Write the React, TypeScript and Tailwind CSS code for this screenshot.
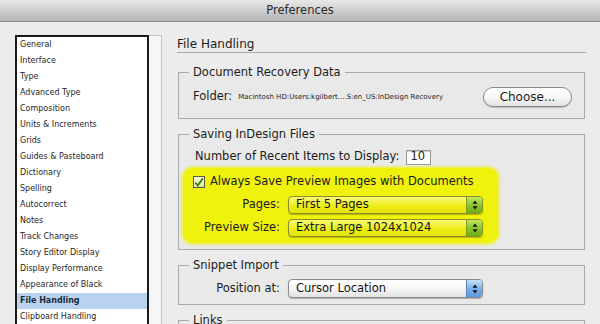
import React from 'react';

const categories = [
  'General',
  'Interface',
  'Type',
  'Advanced Type',
  'Composition',
  'Units & Increments',
  'Grids',
  'Guides & Pasteboard',
  'Dictionary',
  'Spelling',
  'Autocorrect',
  'Notes',
  'Track Changes',
  'Story Editor Display',
  'Display Performance',
  'Appearance of Black',
  'File Handling',
  'Clipboard Handling',
];

const Arrows: React.FC = () => (
  <svg width="6" height="10" viewBox="0 0 6 10">
    <path d="M3 0.5 L5.5 3.8 L0.5 3.8 Z" fill="#111" />
    <path d="M3 9.5 L5.5 6.2 L0.5 6.2 Z" fill="#111" />
  </svg>
);

const Select: React.FC<{ value: string; tone: 'yellow' | 'blue'; h: string }> = ({ value, tone, h }) => {
  const yellow = tone === 'yellow';
  return (
    <div
      className={
        'ml-[8px] flex w-[195px] overflow-hidden rounded-[4px] border shadow-[0_1px_1px_rgba(0,0,0,0.25)] ' +
        h +
        (yellow
          ? ' border-[#8c8c2a] bg-gradient-to-b from-[#fbfb70] via-[#eeee18] to-[#e4e40a]'
          : ' border-[#8a8a8a] bg-gradient-to-b from-[#ffffff] via-[#f6f6f6] to-[#e2e2e2]')
      }
    >
      <div className="flex flex-1 items-center pl-[7px] text-[11.5px] text-[#141414]">{value}</div>
      <div
        className={
          'flex w-[16px] items-center justify-center border-l ' +
          (yellow
            ? 'border-[#7a9a20] bg-gradient-to-b from-[#c4e860] via-[#8cc62a] to-[#6eae18]'
            : 'border-[#5a86b8] bg-gradient-to-b from-[#c6e0fa] via-[#7ab2ec] to-[#5c9ae0]')
        }
      >
        <Arrows />
      </div>
    </div>
  );
};

export default function App() {
  return (
    <div className="h-[324px] w-[600px] overflow-hidden bg-[#ececec] font-['DejaVu_Sans',sans-serif] text-[#1c1c1c]">
      {/* window title */}
      <div className="flex h-[22px] items-center justify-center border-b border-[#8c8c8c] bg-gradient-to-b from-[#e9e9e9] to-[#b4b4b4] text-[11.5px] text-[#2a2a2a]">
        Preferences
      </div>

      <div className="flex">
        {/* category list */}
        <div className="flex w-[163px] pl-[15px] pt-[13px]">
          <div className="h-[320px] w-[134px] border-2 border-[#1a1a1a] bg-white">
            {categories.map((c) => (
              <div
                key={c}
                className={
                  'flex h-[16px] items-center pl-[3px] text-[8px] ' +
                  (c === 'File Handling' ? 'bg-[#b9d3ef] font-bold text-[#1a2a40]' : 'text-[#262626]')
                }
              >
                {c}
              </div>
            ))}
          </div>
          <div className="h-[320px] w-[13px] border-y border-r border-[#c4c4c4] bg-[#f6f6f6]" />
        </div>

        {/* settings pane */}
        <div className="flex-1 pl-[14px] pt-[14px]">
          <div className="h-[17px] w-[409px] border-b border-[#a8a8a8] text-[12px] leading-[16px]">File Handling</div>

          <fieldset className="ml-[1px] mt-[12px] w-[407px] border border-[#a9a9a9] bg-[#e9e9e9] px-[4px] pb-[11px] pt-[8px]">
            <legend className="ml-[6px] px-[4px] text-[11.5px] leading-[14px]">Document Recovery Data</legend>
            <div className="flex h-[20px] items-center pl-[10px] pr-[8px]">
              <span className="text-[11.5px]">Folder:</span>
              <span className="ml-[6px] text-[7px] text-[#262626]">Macintosh HD:Users:kgilbert....S:en_US:InDesign Recovery</span>
              <div className="ml-auto flex h-[20px] w-[89px] items-center justify-center rounded-full border border-[#8a8a8a] bg-gradient-to-b from-[#ffffff] via-[#f8f8f8] to-[#e2e2e2] text-[12px] shadow-[0_1px_1px_rgba(0,0,0,0.2)]">
                Choose...
              </div>
            </div>
          </fieldset>

          <fieldset className="ml-[1px] mt-[8px] w-[407px] border border-[#a9a9a9] bg-[#e9e9e9] px-[4px] pb-[6px] pt-[9px]">
            <legend className="ml-[6px] px-[4px] text-[11.5px] leading-[14px]">Saving InDesign Files</legend>
            <div className="flex h-[14px] items-center pl-[12px]">
              <span className="text-[11.5px]">Number of Recent Items to Display:</span>
              <div className="ml-[7px] flex h-[15px] w-[25px] items-center border border-[#9a9a9a] bg-white pl-[3px] text-[11.5px] shadow-[inset_0_1px_1px_rgba(0,0,0,0.2)]">
                10
              </div>
            </div>

            <div className="mt-[4px] h-[75px] w-[315px] rounded-[10px] bg-[#eef20c] pl-[10px] pt-[6px] shadow-[0_0_2px_2px_rgba(238,242,12,0.6)]">
              <div className="flex h-[16px] items-center">
                <div className="flex h-[12px] w-[12px] items-center justify-center border border-[#5a5a3a] bg-gradient-to-b from-[#fbfbe0] to-[#e6e6a0]">
                  <svg width="11" height="11" viewBox="0 0 11 11">
                    <path d="M1.5 5.5 L4.2 8.8 L9.8 0.8" fill="none" stroke="#2f7d16" strokeWidth="2" />
                  </svg>
                </div>
                <span className="ml-[5px] text-[11.5px]">Always Save Preview Images with Documents</span>
              </div>
              <div className="mt-[6px] flex items-center">
                <span className="w-[87px] text-right text-[11.5px]">Pages:</span>
                <Select value="First 5 Pages" tone="yellow" h="h-[18px]" />
              </div>
              <div className="mt-[5px] flex items-center">
                <span className="w-[87px] text-right text-[11.5px]">Preview Size:</span>
                <Select value="Extra Large 1024x1024" tone="yellow" h="h-[18px]" />
              </div>
            </div>
          </fieldset>

          <fieldset className="ml-[1px] mt-[8px] w-[407px] border border-[#a9a9a9] bg-[#e9e9e9] px-[4px] pb-[6px] pt-[7px]">
            <legend className="ml-[6px] px-[4px] text-[11.5px] leading-[14px]">Snippet Import</legend>
            <div className="flex items-center pl-[10px]">
              <span className="w-[87px] text-right text-[11.5px]">Position at:</span>
              <Select value="Cursor Location" tone="blue" h="h-[19px]" />
            </div>
          </fieldset>

          <fieldset className="ml-[1px] mt-[8px] h-[60px] w-[407px] border border-[#a9a9a9] bg-[#e9e9e9] px-[4px]">
            <legend className="ml-[6px] px-[4px] text-[11.5px] leading-[14px]">Links</legend>
          </fieldset>
        </div>
      </div>
    </div>
  );
}
